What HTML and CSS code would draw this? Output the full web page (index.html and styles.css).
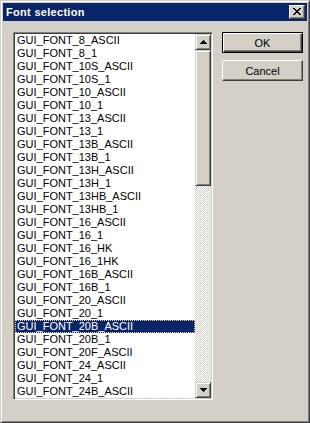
FILE: index.html
```html
<!DOCTYPE html>
<html>
<head>
<meta charset="utf-8">
<link rel="stylesheet" href="styles.css">
</head>
<body>
<div class="window">
  <div class="titlebar">
    <span class="title">Font selection</span>
    <div class="close">
      <svg width="8" height="7" viewBox="0 0 8 7"><path d="M0 0h2v1h1v1h2V1h1V0h2v1H7v1H6v1H5v1h1v1h1v1h1v1H6V6H5V5H3v1H2v1H0V6h1V5h1V4h1V3H2V2H1V1H0z" fill="#000"/></svg>
    </div>
  </div>
  <div class="content">
    <div class="listbox">
      <ul class="items">
        <li>GUI_FONT_8_ASCII</li>
        <li>GUI_FONT_8_1</li>
        <li>GUI_FONT_10S_ASCII</li>
        <li>GUI_FONT_10S_1</li>
        <li>GUI_FONT_10_ASCII</li>
        <li>GUI_FONT_10_1</li>
        <li>GUI_FONT_13_ASCII</li>
        <li>GUI_FONT_13_1</li>
        <li>GUI_FONT_13B_ASCII</li>
        <li>GUI_FONT_13B_1</li>
        <li>GUI_FONT_13H_ASCII</li>
        <li>GUI_FONT_13H_1</li>
        <li>GUI_FONT_13HB_ASCII</li>
        <li>GUI_FONT_13HB_1</li>
        <li>GUI_FONT_16_ASCII</li>
        <li>GUI_FONT_16_1</li>
        <li>GUI_FONT_16_HK</li>
        <li>GUI_FONT_16_1HK</li>
        <li>GUI_FONT_16B_ASCII</li>
        <li>GUI_FONT_16B_1</li>
        <li>GUI_FONT_20_ASCII</li>
        <li>GUI_FONT_20_1</li>
        <li class="selected">GUI_FONT_20B_ASCII</li>
        <li>GUI_FONT_20B_1</li>
        <li>GUI_FONT_20F_ASCII</li>
        <li>GUI_FONT_24_ASCII</li>
        <li>GUI_FONT_24_1</li>
        <li>GUI_FONT_24B_ASCII</li>
      </ul>
      <div class="scrollbar">
        <div class="sbtn">
          <svg width="7" height="4" viewBox="0 0 7 4"><path d="M3 0h1v1h1v1h1v1h1v1H0V3h1V2h1V1h1z" fill="#000"/></svg>
        </div>
        <div class="thumb"></div>
        <div class="track"></div>
        <div class="sbtn">
          <svg width="7" height="4" viewBox="0 0 7 4"><path d="M0 0h7v1H6v1H5v1H4v1H3V3H2V2H1V1H0z" fill="#000"/></svg>
        </div>
      </div>
    </div>
    <div class="buttons">
      <div class="btn default"><span class="btn-inner">OK</span></div>
      <div class="btn"><span class="btn-inner">Cancel</span></div>
    </div>
  </div>
</div>
</body>
</html>
```
FILE: styles.css
```css
html, body {
  margin: 0;
  padding: 0;
  background: #d4d0c8;
}
.window {
  width: 310px;
  height: 423px;
  box-sizing: border-box;
  background: #d4d0c8;
  border: 1px solid;
  border-color: #d4d0c8 #404040 #404040 #d4d0c8;
  box-shadow: inset 1px 1px #fff, inset -1px -1px #808080;
  padding: 2px;
  font-family: "Liberation Sans", Arial, sans-serif;
  font-size: 11px;
  color: #000;
}
.titlebar {
  height: 18px;
  background: #0a246a;
  display: flex;
  align-items: center;
  justify-content: space-between;
  padding: 0 2px 0 2px;
}
.title {
  color: #fff;
  font-weight: bold;
  font-size: 11px;
  letter-spacing: 0.3px;
  padding-left: 1px;
}
.close {
  width: 16px;
  height: 14px;
  box-sizing: border-box;
  background: #d4d0c8;
  border: 1px solid;
  border-color: #fff #404040 #404040 #fff;
  box-shadow: inset -1px -1px #808080;
  display: flex;
  align-items: center;
  justify-content: center;
  padding: 0 1px 1px 0;
}
.close svg { display: block; }
.content {
  display: flex;
  padding: 11px 0 0 10px;
}
.listbox {
  width: 200px;
  height: 368px;
  box-sizing: border-box;
  border: 1px solid;
  border-color: #808080 #fff #fff #808080;
  box-shadow: inset 1px 1px #404040, inset -1px -1px #d4d0c8;
  padding: 1px;
  background: #fff;
  display: flex;
  overflow: hidden;
}
.items {
  list-style: none;
  margin: 0;
  padding: 0;
  flex: 1;
  overflow: hidden;
}
.items li {
  height: 13px;
  line-height: 13px;
  padding-left: 2px;
  white-space: nowrap;
  box-sizing: border-box;
}
.items li.selected {
  background: #0a246a;
  color: #fff;
  outline: 1px dotted #f5db95;
  outline-offset: -1px;
}
.scrollbar {
  width: 16px;
  display: flex;
  flex-direction: column;
}
.sbtn {
  width: 16px;
  height: 16px;
  box-sizing: border-box;
  background: #d4d0c8;
  border: 1px solid;
  border-color: #d4d0c8 #404040 #404040 #d4d0c8;
  box-shadow: inset 1px 1px #fff, inset -1px -1px #808080;
  display: flex;
  align-items: center;
  justify-content: center;
  flex: none;
}
.sbtn svg { display: block; }
.thumb {
  height: 136px;
  flex: none;
  box-sizing: border-box;
  background: #d4d0c8;
  border: 1px solid;
  border-color: #d4d0c8 #404040 #404040 #d4d0c8;
  box-shadow: inset 1px 1px #fff, inset -1px -1px #808080;
}
.track {
  flex: 1;
  background: repeating-conic-gradient(#d4d0c8 0 25%, #fff 0 50%) 0 0 / 2px 2px;
}
.buttons {
  display: flex;
  flex-direction: column;
  gap: 7px;
  margin-left: 9px;
}
.btn {
  width: 81px;
  height: 21px;
  box-sizing: border-box;
  background: #d4d0c8;
  border: 1px solid;
  border-color: #fff #404040 #404040 #fff;
  box-shadow: inset -1px -1px #808080;
  display: flex;
  align-items: center;
  justify-content: center;
}
.btn.default {
  border: 1px solid #000;
  box-shadow: inset 1px 1px #fff, inset -1px -1px #404040, inset -2px -2px #808080;
}
.btn-inner {
  font-size: 11px;
}
```
